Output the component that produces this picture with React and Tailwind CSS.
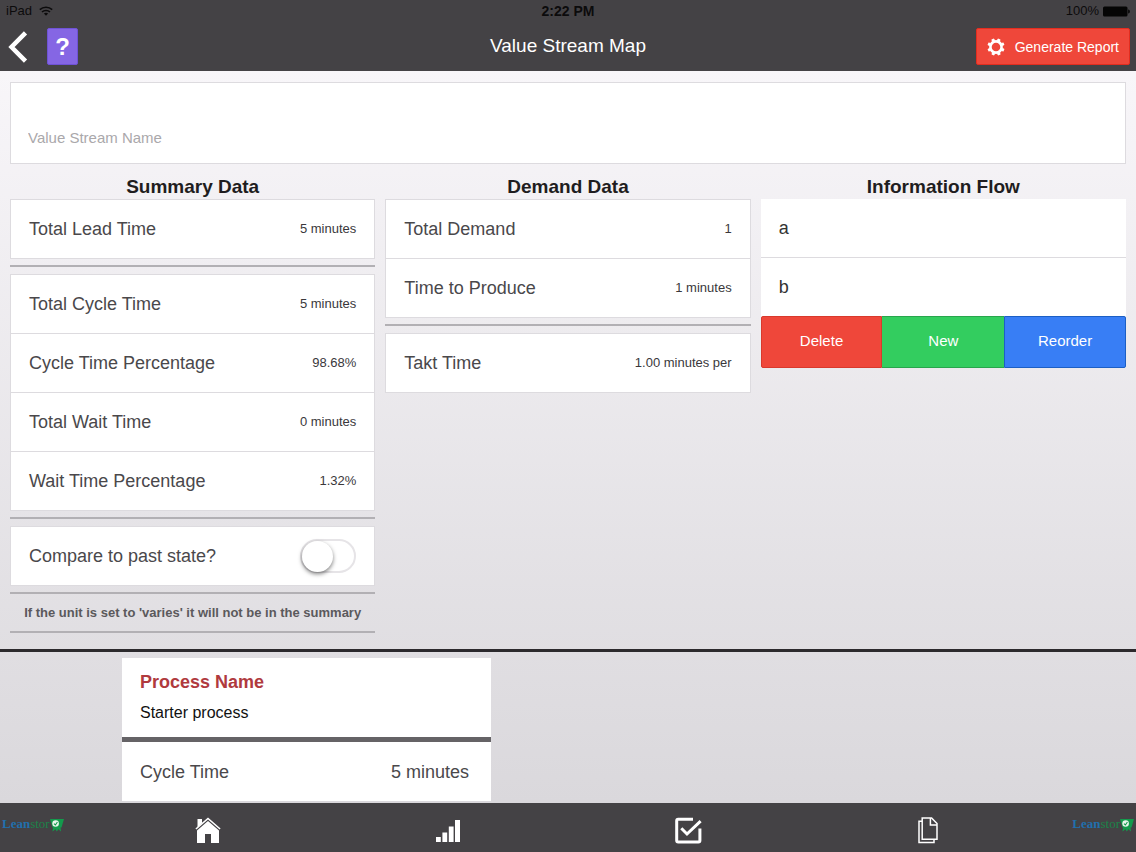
import { useState } from 'react';

const leadTime = [{ label: 'Total Lead Time', value: '5 minutes' }];

const cycleTimes = [
  { label: 'Total Cycle Time', value: '5 minutes' },
  { label: 'Cycle Time Percentage', value: '98.68%' },
  { label: 'Total Wait Time', value: '0 minutes' },
  { label: 'Wait Time Percentage', value: '1.32%' },
];

const demand = [
  { label: 'Total Demand', value: '1' },
  { label: 'Time to Produce', value: '1 minutes' },
];

const takt = [{ label: 'Takt Time', value: '1.00 minutes per' }];

const DataCard = ({ rows }) => (
  <dl className="border border-[#dddbdf] bg-white divide-y divide-[#dddbdf]">
    {rows.map((row) => (
      <div key={row.label} className="flex h-[59px] last:h-[58px] items-center justify-between px-[18px]">
        <dt className="text-lg text-[#4a484b]">{row.label}</dt>
        <dd className="text-[13px] text-[#3a383b]">{row.value}</dd>
      </div>
    ))}
  </dl>
);

const Rule = () => <hr className="mt-[6px] mb-[7px] border-t-2 border-[#b2b0b4]" />;

const ColumnTitle = ({ children }) => (
  <h2 className="text-center text-[19px] leading-6 font-bold text-[#1f1d20]">{children}</h2>
);

const WifiIcon = () => (
  <svg width="14" height="10" viewBox="0 0 14 10" fill="none" stroke="#0c0b0c" strokeWidth="1.6" aria-hidden="true">
    <path d="M0.8 3.6C4.2 0.4 9.8 0.4 13.2 3.6" />
    <path d="M3 6C5.2 3.9 8.8 3.9 11 6" />
    <path d="M7 9.8L4.9 7.6C6.1 6.6 7.9 6.6 9.1 7.6Z" fill="#0c0b0c" stroke="none" />
  </svg>
);

const BatteryIcon = () => (
  <svg width="27" height="11" viewBox="0 0 27 11" fill="#050505" aria-hidden="true">
    <rect x="0" y="0.5" width="24.5" height="10" rx="1.5" />
    <path d="M25.2 3.5C27.4 4 27.4 7 25.2 7.5Z" />
  </svg>
);

const BackIcon = () => (
  <svg width="20" height="32" viewBox="0 0 20 32" fill="none" stroke="#fff" strokeWidth="4.5" aria-hidden="true">
    <path d="M17.5 1.8L3.5 16L17.5 30.2" />
  </svg>
);

const teeth = [0, 45, 90, 135, 180, 225, 270, 315];

const GearIcon = () => (
  <svg width="18" height="18" viewBox="0 0 18 18" aria-hidden="true">
    <circle cx="9" cy="9" r="5.6" fill="none" stroke="#fff" strokeWidth="2.6" />
    {teeth.map((angle) => (
      <path key={angle} d="M7.2 2.8L7.7 0.4H10.3L10.8 2.8Z" fill="#fff" transform={`rotate(${angle + 22} 9 9)`} />
    ))}
  </svg>
);

const HomeIcon = () => (
  <svg width="26" height="27" viewBox="0 0 26 27" fill="#fff" aria-hidden="true">
    <path d="M2.5 2H7V6.2L2.5 10.2Z" />
    <path d="M13 0.4L25.6 11.4L24.6 12.6L13 2.6L1.4 12.6L0.4 11.4Z" />
    <path d="M13 4L24 13.4V26H16V17H10V26H2V13.4Z" />
  </svg>
);

const BarsIcon = () => (
  <svg width="24" height="22" viewBox="0 0 24 22" fill="#fff" aria-hidden="true">
    <rect x="0" y="17" width="4.8" height="5" />
    <rect x="6.4" y="12.5" width="4.8" height="9.5" />
    <rect x="12.8" y="6.5" width="4.8" height="15.5" />
    <rect x="19" y="0" width="5" height="22" />
  </svg>
);

const CheckIcon = () => (
  <svg width="27" height="27" viewBox="0 0 27 27" fill="none" stroke="#fff" strokeWidth="3" aria-hidden="true">
    <path d="M18 2.3H3.2Q1.7 2.3 1.7 3.8V23.4Q1.7 24.9 3.2 24.9H23.4Q24.9 24.9 24.9 23.4V11.5" />
    <path d="M6.3 11.2L12 17L25.6 4.2" />
  </svg>
);

const CopyIcon = () => (
  <svg width="20" height="27" viewBox="0 0 20 27" fill="none" stroke="#fff" strokeWidth="1.5" aria-hidden="true">
    <path d="M4.2 1H13.6L19 6.6V22.3H4.2Z" />
    <path d="M12.4 1V8H19" />
    <path d="M4.2 4.2H1V25.6H16V22.3" />
  </svg>
);

const Logo = () => (
  <span className="flex items-center pb-2 font-['Liberation_Serif',serif] text-[13px] leading-4">
    <span className="font-bold text-[#2170ad]">Lean</span>
    <span className="text-[#1b8449]">stor</span>
    <svg width="14" height="16" viewBox="0 0 14 16" aria-hidden="true">
      <path d="M0 3H14L11.5 11.5H2.5Z" fill="#139a4c" />
      <path d="M3 11L2.5 15.5L5.5 13.2L6.8 15.5L8.4 13.2L11 15.5L10.5 11Z" fill="#139a4c" />
      <circle cx="5.6" cy="7.5" r="3.3" fill="#e8f5ec" />
      <path d="M4 7.6L5.4 9L7.4 6" fill="none" stroke="#139a4c" strokeWidth="1.1" />
    </svg>
  </span>
);

const tabs = [
  { name: 'Home', Icon: HomeIcon },
  { name: 'Charts', Icon: BarsIcon },
  { name: 'Tasks', Icon: CheckIcon },
  { name: 'Documents', Icon: CopyIcon },
];

const App = () => {
  const [name, setName] = useState('');
  const [compare, setCompare] = useState(false);

  return (
    <div className="flex min-h-dvh flex-col bg-linear-to-b from-[#fbf9fc] to-[#d8d6da] font-['Liberation_Sans',Arial,sans-serif]">
      <header className="bg-[#444245]">
        <div className="grid h-[22px] grid-cols-3 items-center px-[6px] text-[13px] text-[#0c0b0c]">
          <span className="flex items-center gap-[7px]">iPad <WifiIcon /></span>
          <span className="text-center text-sm font-bold">2:22 PM</span>
          <span className="flex items-center justify-end gap-1">100% <BatteryIcon /></span>
        </div>
        <div className="grid h-[49px] grid-cols-3 items-center px-[6px]">
          <div className="flex items-center gap-[19px] pl-[2px]">
            <button type="button" aria-label="Back"><BackIcon /></button>
            <button type="button" className="h-[37px] w-[31px] rounded-xs border border-[#6f52d6] bg-[#8566e4] text-2xl font-bold text-white">?</button>
          </div>
          <h1 className="text-center text-[19px] text-white">Value Stream Map</h1>
          <button type="button" className="flex h-[37px] items-center gap-[10px] justify-self-end rounded-xs border border-[#e42d1f] bg-[#ef473a] px-[10px] text-sm text-white">
            <GearIcon />
            Generate Report
          </button>
        </div>
      </header>

      <main className="flex flex-1 flex-col">
        <section className="border-b-3 border-[#2c2a2d] px-[10px] pt-[11px] pb-[9px]">
          <label className="block border border-[#dddbdf] bg-white px-[17px] pt-10 pb-3">
            <input
              type="text"
              aria-label="Value Stream Name"
              placeholder="Value Stream Name"
              value={name}
              onChange={(e) => setName(e.target.value)}
              className="block h-7 w-full text-[15px] text-[#333] outline-none placeholder:text-[#aaa8ab]"
            />
          </label>

          <div className="mt-[11px] grid grid-cols-3 items-start gap-[10px]">
            <div>
              <ColumnTitle>Summary Data</ColumnTitle>
              <DataCard rows={leadTime} />
              <Rule />
              <DataCard rows={cycleTimes} />
              <Rule />
              <div className="flex h-[60px] items-center justify-between border border-[#dddbdf] bg-white px-[18px]">
                <label htmlFor="compare" className="text-lg text-[#4a484b]">Compare to past state?</label>
                <input
                  id="compare"
                  type="checkbox"
                  role="switch"
                  checked={compare}
                  onChange={(e) => setCompare(e.target.checked)}
                  className="flex h-[34px] w-14 appearance-none items-center rounded-full border-2 border-[#e6e4e7] bg-white before:size-[31px] before:rounded-full before:bg-white before:shadow-[0_2px_4px_rgba(0,0,0,0.5)] checked:justify-end checked:bg-[#33cd5f]"
                />
              </div>
              <Rule />
              <p className="text-center text-[13px] leading-6 font-bold text-[#5b595c]">
                If the unit is set to 'varies' it will not be in the summary
              </p>
              <Rule />
            </div>

            <div>
              <ColumnTitle>Demand Data</ColumnTitle>
              <DataCard rows={demand} />
              <Rule />
              <DataCard rows={takt} />
            </div>

            <div>
              <ColumnTitle>Information Flow</ColumnTitle>
              <ul className="divide-y divide-[#dddbdf] bg-white text-lg text-[#333]">
                <li className="flex h-[59px] items-center px-[18px]">a</li>
                <li className="flex h-[58px] items-center px-[18px]">b</li>
              </ul>
              <div className="grid h-[52px] grid-cols-3 text-[15px] text-white">
                <button type="button" className="rounded-l-xs border border-[#d9392c] bg-[#ef473a] pb-[2px]">Delete</button>
                <button type="button" className="border-y border-[#28a54c] bg-[#33cd5f] pb-[2px]">New</button>
                <button type="button" className="rounded-r-xs border border-[#1c5fc4] bg-[#387ef5] pb-[2px]">Reorder</button>
              </div>
            </div>
          </div>
        </section>

        <section className="flex flex-1 overflow-x-auto px-[122px] pt-[6px] pb-[2px]">
          <article className="w-[369px] shrink-0 bg-white">
            <div className="h-[84px] border-b-5 border-[#656366] px-[18px] pt-3">
              <h3 className="text-lg leading-6 font-bold text-[#b03a3e]">Process Name</h3>
              <p className="mt-[7px] text-base leading-6 text-[#111]">Starter process</p>
            </div>
            <div className="flex h-[59px] items-center justify-between pr-[22px] pl-[18px] text-lg text-[#4a484b]">
              <span>Cycle Time</span>
              <span>5 minutes</span>
            </div>
          </article>
        </section>
      </main>

      <footer className="flex h-[49px] items-center justify-between bg-[#444245]">
        <div className="flex w-[88px] pl-[2px]"><Logo /></div>
        <nav className="grid flex-1 grid-cols-4">
          {tabs.map(({ name: tabName, Icon }) => (
            <a key={tabName} href={`#${tabName.toLowerCase()}`} aria-label={tabName} className="flex h-[49px] items-center justify-center pt-[6px]">
              <Icon />
            </a>
          ))}
        </nav>
        <div className="flex w-[88px] justify-end pr-[2px]"><Logo /></div>
      </footer>
    </div>
  );
};

export default App;
